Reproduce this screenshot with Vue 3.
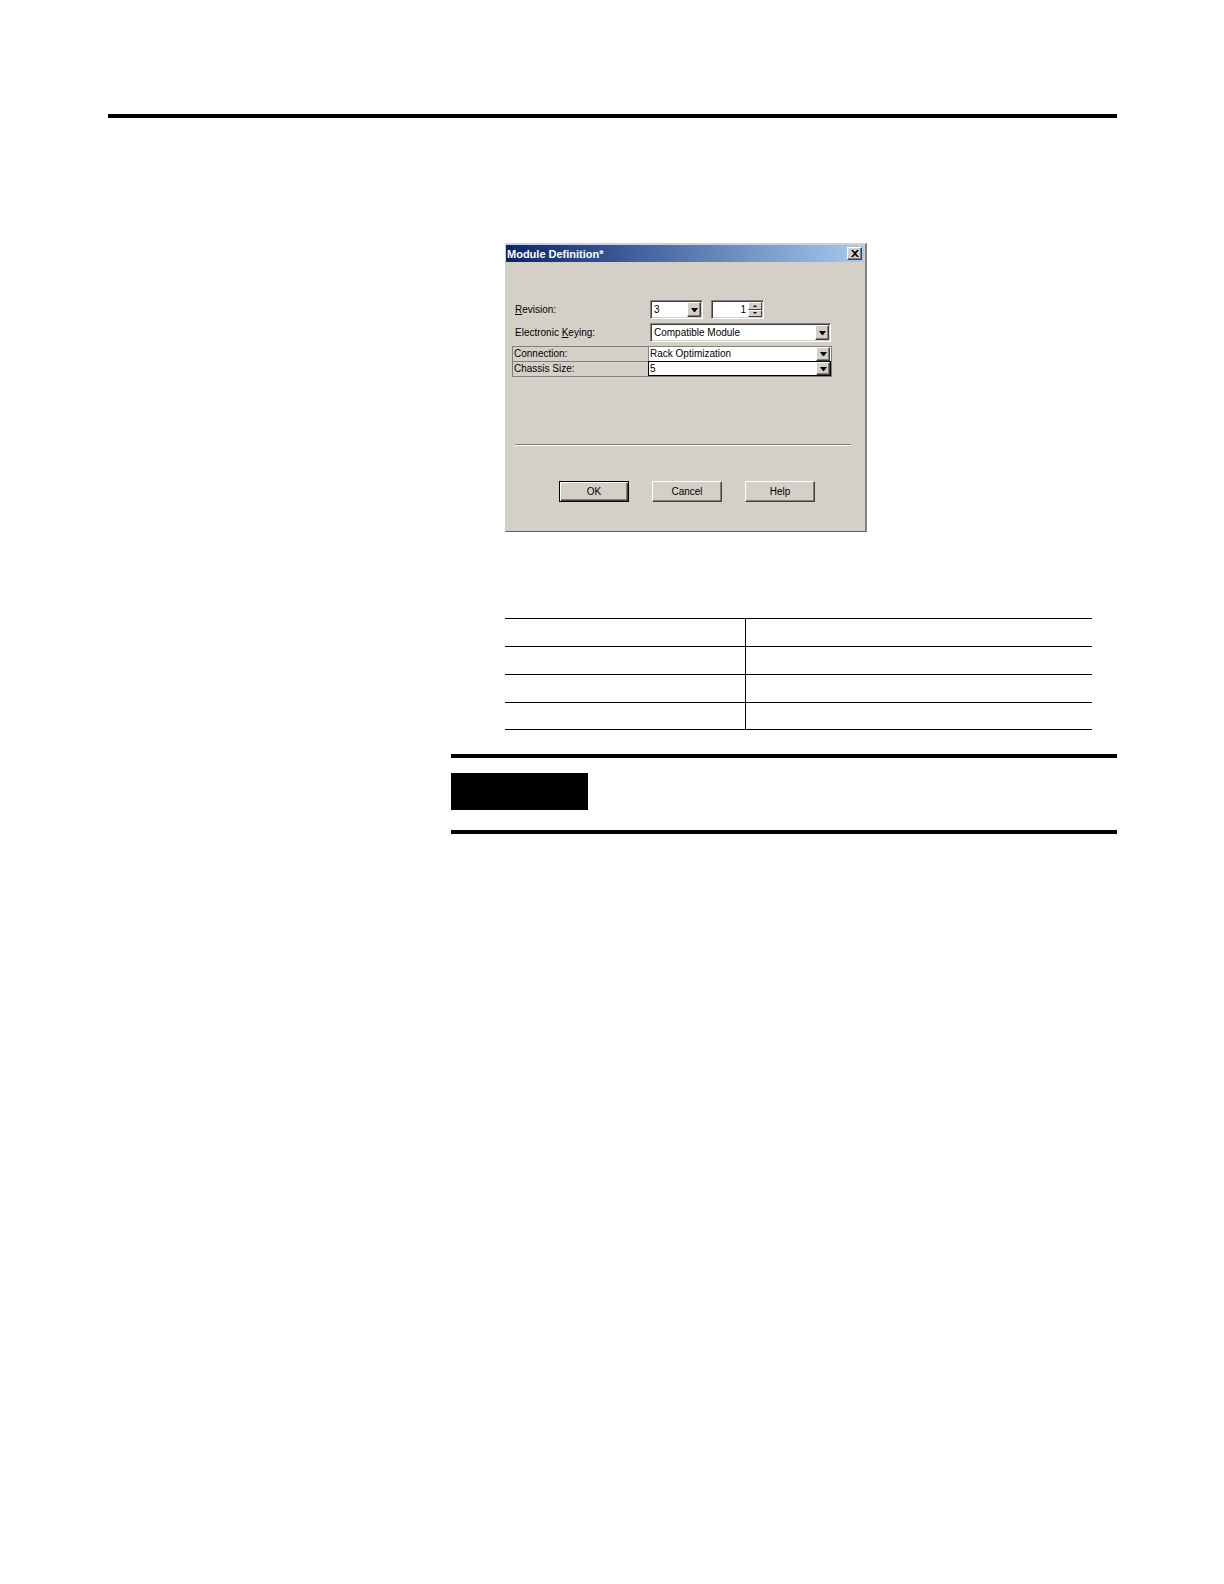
<script setup>
import { ref } from 'vue'

const revision = ref('3')
const minor = ref('1')
const keying = ref('Compatible Module')
const connection = ref('Rack Optimization')
const chassis = ref('5')

const step = (n) => {
  minor.value = String(Math.max(1, Number(minor.value) + n))
}
</script>

<template>
  <main class="page">
    <hr class="rule" />

    <div class="column">
      <section class="dialog" role="dialog" aria-labelledby="dialog-title">
        <header class="titlebar">
          <h1 id="dialog-title">Module Definition*</h1>
          <button class="close" type="button" aria-label="Close">
            <svg width="8" height="7" viewBox="0 0 8 7"><path d="M0 0h2l2 2 2-2h2L5 3.5 8 7H6L4 5 2 7H0l3-3.5z" /></svg>
          </button>
        </header>

        <form class="form" @submit.prevent>
          <div class="row">
            <label class="name" for="revision"><u>R</u>evision:</label>
            <span class="combo short">
              <select id="revision" v-model="revision"><option>3</option></select>
              <span class="arrow"><svg width="7" height="4" viewBox="0 0 7 4"><path d="M0 0h7L4 4H3z" /></svg></span>
            </span>
            <span class="combo short spin">
              <input v-model="minor" type="text" aria-label="Minor revision" />
              <span class="steps">
                <button type="button" aria-label="Increase" @click="step(1)">
                  <svg width="4" height="2" viewBox="0 0 4 2"><path d="M0 2h4L2 0z" /></svg>
                </button>
                <button type="button" aria-label="Decrease" @click="step(-1)">
                  <svg width="4" height="2" viewBox="0 0 4 2"><path d="M0 0h4L2 2z" /></svg>
                </button>
              </span>
            </span>
          </div>

          <div class="row">
            <label class="name" for="keying">Electronic <u>K</u>eying:</label>
            <span class="combo wide">
              <select id="keying" v-model="keying"><option>Compatible Module</option></select>
              <span class="arrow"><svg width="7" height="4" viewBox="0 0 7 4"><path d="M0 0h7L4 4H3z" /></svg></span>
            </span>
          </div>

          <div class="grid">
            <div class="line">
              <label for="connection">Connection:</label>
              <span class="cell">
                <select id="connection" v-model="connection"><option>Rack Optimization</option></select>
                <span class="arrow"><svg width="7" height="4" viewBox="0 0 7 4"><path d="M0 0h7L4 4H3z" /></svg></span>
              </span>
            </div>
            <div class="line">
              <label for="chassis">Chassis Size:</label>
              <span class="cell active">
                <select id="chassis" v-model="chassis"><option>5</option></select>
                <span class="arrow"><svg width="7" height="4" viewBox="0 0 7 4"><path d="M0 0h7L4 4H3z" /></svg></span>
              </span>
            </div>
          </div>

          <hr class="groove" />

          <div class="actions">
            <button class="push default" type="submit">OK</button>
            <button class="push" type="button">Cancel</button>
            <button class="push" type="button">Help</button>
          </div>
        </form>
      </section>

      <table class="blank">
        <tbody>
          <tr v-for="n in 4" :key="n"><td class="first"></td><td></td></tr>
        </tbody>
      </table>

      <aside class="note"><div class="tag"></div></aside>
    </div>
  </main>
</template>

<style>
body {
  margin: 0;
  background: #fff;
}
</style>

<style scoped>
* {
  box-sizing: border-box;
}

.page {
  padding: 114px 107px 0 108px;
  font-family: "Liberation Sans", Arial, sans-serif;
  font-size: 10px;
  line-height: 14px;
  color: #000;
}

.rule {
  height: 4px;
  margin: 0;
  border: 0;
  background: #000;
}

.column {
  margin: 125px 0 0 343px;
}

.dialog {
  width: 362px;
  margin-left: 54px;
  padding: 1px 1px 0 0;
  border: 1px solid #d4d0c8;
  border-right: 2px solid #808080;
  border-bottom: 1px solid #606060;
  background: #d4d0c8;
}

.titlebar {
  display: flex;
  align-items: center;
  justify-content: space-between;
  height: 17px;
  padding: 0 2px 0 1px;
  background: linear-gradient(90deg, #0a246a, #a6caf0);
}

h1 {
  margin: 0;
  font: bold 11px/16px "Liberation Sans", Arial, sans-serif;
  color: #fff;
}

button,
select,
input {
  margin: 0;
  padding: 0;
  font: inherit;
  color: inherit;
}

button {
  display: flex;
  align-items: center;
  justify-content: center;
  border: 1px solid;
  border-color: #fff #404040 #404040 #fff;
  background: #d4d0c8;
}

svg {
  display: block;
}

.close {
  width: 15px;
  height: 13px;
  box-shadow: inset -1px -1px #808080;
}

.form {
  padding: 38px 13px 29px 6px;
}

.row {
  display: flex;
  align-items: center;
  margin-bottom: 4px;
  padding-left: 3px;
}

.name {
  width: 135px;
}

.combo {
  display: flex;
  position: relative;
  height: 19px;
  border: 1px solid;
  border-color: #808080 #fff #fff #808080;
  background: #fff;
  box-shadow: inset 1px 1px #404040, inset -1px -1px #d4d0c8;
}

.short {
  width: 53px;
}

.wide {
  width: 181px;
}

.spin {
  margin-left: 8px;
}

select,
input {
  width: 100%;
  min-width: 0;
  border: 0;
  outline: 0;
  background: transparent;
  appearance: none;
}

.combo select {
  padding-left: 3px;
}

.arrow {
  display: flex;
  align-items: center;
  justify-content: center;
  position: absolute;
  top: 1px;
  right: 1px;
  bottom: 1px;
  width: 14px;
  border: 1px solid;
  border-color: #fff #404040 #404040 #fff;
  background: #d4d0c8;
  box-shadow: inset -1px -1px #808080;
  pointer-events: none;
}

.spin input {
  flex: 1;
  padding-right: 2px;
  text-align: right;
}

.steps {
  display: flex;
  flex-direction: column;
  width: 15px;
  padding: 1px 1px 1px 0;
}

.steps button {
  flex: 1;
  min-height: 0;
}

.grid {
  width: 320px;
  border: 1px solid #808080;
}

.line {
  display: flex;
  height: 14px;
}

.line + .line {
  height: 15px;
  border-top: 1px solid #808080;
}

.line label {
  width: 135px;
  padding-left: 1px;
}

.cell {
  display: flex;
  flex: 1;
  position: relative;
  border-left: 1px solid #808080;
  background: #fff;
}

.cell select {
  padding-left: 1px;
}

.cell .arrow {
  top: 0;
  bottom: 0;
}

.active {
  border-color: #000;
  box-shadow: 0 -1px #000, inset 0 -1px #000, inset -1px 0 #000;
}

.active .arrow {
  bottom: 1px;
}

.groove {
  margin: 67px 0 35px 3px;
  border: 0;
  border-top: 1px solid #808080;
  border-bottom: 1px solid #fff;
}

.actions {
  display: flex;
  gap: 23px;
  padding-left: 47px;
}

.push {
  width: 70px;
  height: 21px;
  box-shadow: inset -1px -1px #808080;
}

.default {
  border-color: #000;
  box-shadow: inset 1px 1px #fff, inset -1px -1px #404040, inset -2px -2px #808080;
}

.blank {
  width: calc(100% - 79px);
  margin: 86px 25px 24px 54px;
  border-collapse: collapse;
  table-layout: fixed;
}

.blank td {
  height: 28px;
  padding: 0;
  border-top: 1px solid #000;
  border-bottom: 1px solid #000;
}

.blank tr:last-child td {
  height: 27px;
}

.blank .first {
  width: 41%;
  border-right: 1px solid #000;
}

.note {
  padding: 15px 0 20px;
  border-top: 4px solid #000;
  border-bottom: 4px solid #000;
}

.tag {
  width: 137px;
  height: 37px;
  background: #000;
}
</style>
